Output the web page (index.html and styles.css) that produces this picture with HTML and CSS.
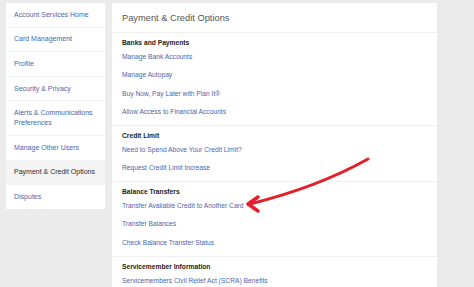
FILE: index.html
```html
<!DOCTYPE html>
<html lang="en">
<head>
  <meta charset="UTF-8" />
  <title>Payment &amp; Credit Options</title>
  <link rel="stylesheet" href="styles.css">
</head>
<body>
<div class="page">
  <nav class="side">
    <a class="side-item" href="#">Account Services Home</a>
    <a class="side-item" href="#">Card Management</a>
    <a class="side-item" href="#">Profile</a>
    <a class="side-item" href="#">Security &amp; Privacy</a>
    <a class="side-item" href="#">Alerts &amp; Communications Preferences</a>
    <a class="side-item" href="#">Manage Other Users</a>
    <a class="side-item active" href="#">Payment &amp; Credit Options</a>
    <a class="side-item" href="#">Disputes</a>
  </nav>

  <main class="panel">
    <h1 class="panel-title">Payment &amp; Credit Options</h1>

    <section class="group">
      <h2>Banks and Payments</h2>
      <a href="#">Manage Bank Accounts</a>
      <a href="#">Manage Autopay</a>
      <a href="#">Buy Now, Pay Later with Plan It®</a>
      <a href="#">Allow Access to Financial Accounts</a>
    </section>

    <section class="group">
      <h2>Credit Limit</h2>
      <a href="#">Need to Spend Above Your Credit Limit?</a>
      <a href="#">Request Credit Limit Increase</a>
    </section>

    <section class="group">
      <h2>Balance Transfers</h2>
      <a href="#">Transfer Available Credit to Another Card</a>
      <a href="#">Transfer Balances</a>
      <a href="#">Check Balance Transfer Status</a>
    </section>

    <section class="group">
      <h2>Servicemember Information</h2>
      <a href="#">Servicemembers Civil Relief Act (SCRA) Benefits</a>
    </section>

    <!-- red annotation arrow drawn over the panel -->
    <svg class="arrow" width="140" height="70" viewBox="0 0 140 70">
      <path d="M130 5 Q80 33 12 50" fill="none" stroke="#e3202a" stroke-width="3" stroke-linecap="round"/>
      <polyline points="20,43 10,50 20,57" fill="none" stroke="#e3202a" stroke-width="3.5" stroke-linecap="round" stroke-linejoin="round"/>
    </svg>
  </main>
</div>
</body>
</html>
```

FILE: styles.css
```css
* { margin: 0; padding: 0; box-sizing: border-box; }
html, body {
  height: 100%; overflow: hidden;
  font-family: 'Liberation Sans', Arial, sans-serif;
  background: #ebebeb;
}

.page {
  display: flex;
  align-items: flex-start;
  gap: 7px;
  padding: 3px 0 0 6px;
  height: 100%;
}

.side {
  width: 99px;
  background: #fff;
  display: flex;
  flex-direction: column;
}

.side-item {
  display: block;
  padding: 6.8px 3px 6.8px 8px;
  font-size: 7px;
  line-height: 10px;
  color: #4d66aa;
  text-decoration: none;
  border-bottom: 1px solid #f2f2f2;
}
.side-item:last-child { border-bottom: none; }

.side-item.active {
  background: #f4f4f4;
  color: #2b2b2b;
}

.panel {
  position: relative;
  width: 325px;
  height: 100%;
  background: #fff;
}

.panel-title {
  font-size: 9.3px;
  font-weight: normal;
  color: #555;
  line-height: 14px;
  padding: 8px 10px 7px;
  border-bottom: 1px solid #f0f0f0;
}

.group {
  display: flex;
  flex-direction: column;
  align-items: flex-start;
  gap: 8.3px;
  padding: 5px 10px 8px;
  border-bottom: 1px solid #f0f0f0;
}

.group h2 {
  font-size: 6.7px;
  font-weight: bold;
  color: #222;
  line-height: 10px;
  margin-bottom: -4.3px;
}

.group a {
  font-size: 6.7px;
  line-height: 10px;
  color: #4c65ab;
  text-decoration: none;
}

.arrow {
  position: absolute;
  left: 126px;
  top: 151px;
}
```
